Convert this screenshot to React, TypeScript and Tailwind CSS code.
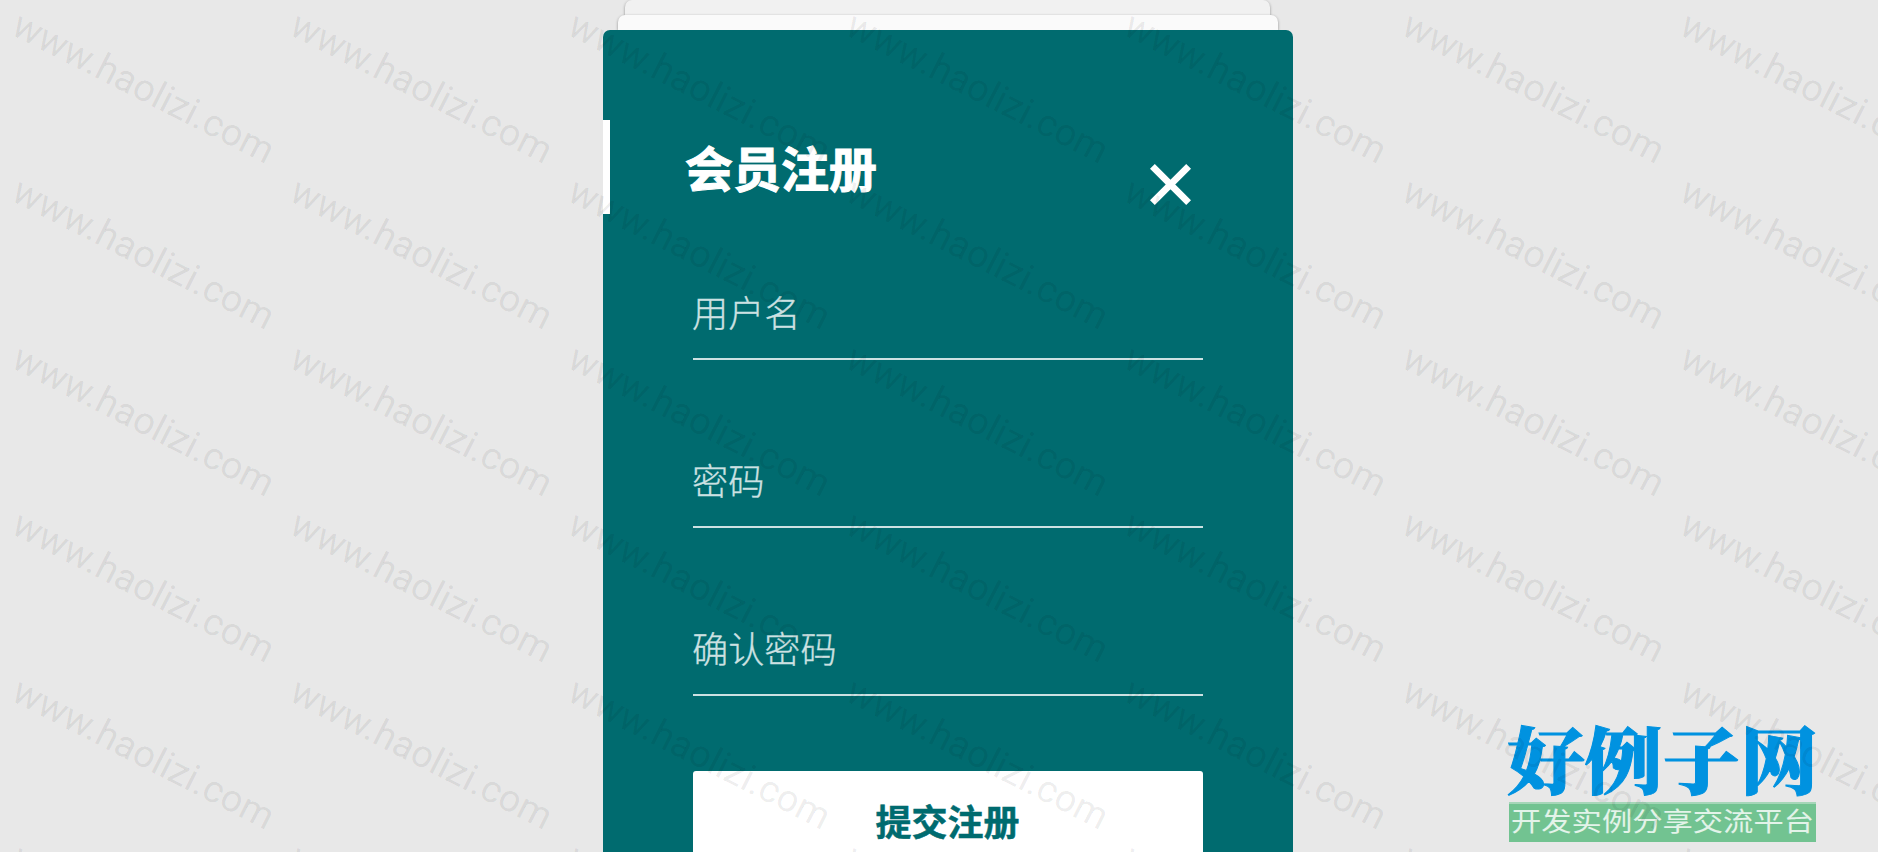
const fields = [
  { name: "username", label: "用户名" },
  { name: "password", label: "密码" },
  { name: "confirm", label: "确认密码" },
]

const CloseIcon = () => (
  <svg width="41" height="41" viewBox="0 0 41 41" stroke="#fff" strokeWidth="6.8">
    <path d="M2.4 2.4 38.6 38.6M38.6 2.4 2.4 38.6" />
  </svg>
)

const Watermark = () => (
  <div className="pointer-events-none absolute inset-0 z-20 overflow-hidden">
    <div className="grid w-[1946px] grid-cols-7 font-['Roboto'] text-[38px] leading-[38px] text-black/[0.07] [-webkit-text-stroke:0.4px_rgba(0,0,0,0.05)]">
      {Array(42).fill("").map((_, i) => (
        <div key={i} className="h-[166.4px] w-[278px] pt-[5px] pl-[24px]">
          <span className="block origin-top-left rotate-[27deg] whitespace-nowrap">www.haolizi.com</span>
        </div>
      ))}
    </div>
  </div>
)

const SiteLogo = () => (
  <div className="absolute top-[720px] left-[1507px] z-10 w-[309px]">
    <p className="flex h-[82px] origin-top-left -translate-y-[3px] scale-x-[1.01] scale-y-[0.95] items-center font-['Noto_Serif_CJK_SC','Noto_Sans_CJK_SC',serif] text-[77px] leading-none font-black whitespace-nowrap text-[#0092e0] [-webkit-text-stroke:1px_#0092e0]">好例子网</p>
    <p className="ml-[2px] flex h-10 items-center justify-center border-t-2 border-[#a5d6b8] bg-[#72c391] pb-[6px] text-[30.3px] leading-none whitespace-nowrap text-white/80">
      <span className="scale-y-[0.87]">开发实例分享交流平台</span>
    </p>
  </div>
)

const App = () => {
  return (
    <main className="relative h-[852px] w-[1878px] overflow-hidden bg-[#e8e8e8] font-['Noto_Sans_CJK_SC',sans-serif]">
      <div className="mx-auto flex w-[690px] translate-x-[9px] flex-col items-center">
        <div className="mr-px h-[15px] w-[645px] rounded-t-[7px] bg-[#f1f1f1] shadow-[0_1px_3px_rgba(0,0,0,0.4)]" />
        <div className="relative h-[15px] w-[660px] rounded-t-[7px] bg-[#fafafa] shadow-[0_1px_3px_rgba(0,0,0,0.4)]" />
        <section className="relative h-[900px] w-[690px] rounded-t-[7px] bg-[#006b6f] pt-[90px]">
          <header className="flex h-[94px] justify-between border-l-[7px] border-white pr-[102px] pl-[75px]">
            <h1 className="pt-[11px] text-[48px] leading-[70px] font-bold text-white [-webkit-text-stroke:1px_#fff]">会员注册</h1>
            <button className="h-[41px] w-[41px] translate-y-[44px]" aria-label="关闭"><CloseIcon /></button>
          </header>
          <form className="px-[90px] pt-[62px]">
            {fields.map((f) => (
              <label key={f.name} className="mb-[84px] block h-[84px] border-b-2 border-[#cce1e2] text-[36.2px] leading-[70px] font-light text-[#cce1e2] [-webkit-text-stroke:0.3px_#cce1e2]">
                <span className="-ml-px">{f.label}</span>
              </label>
            ))}
            <button type="button" className="-mt-[9px] block h-[120px] w-full rounded-[3px] bg-white pr-px pb-[23px] text-[36px] font-bold text-[#006b6f] [-webkit-text-stroke:0.5px_#006b6f]">
              提交注册
            </button>
          </form>
        </section>
      </div>
      <SiteLogo />
      <Watermark />
    </main>
  )
}

export default App
